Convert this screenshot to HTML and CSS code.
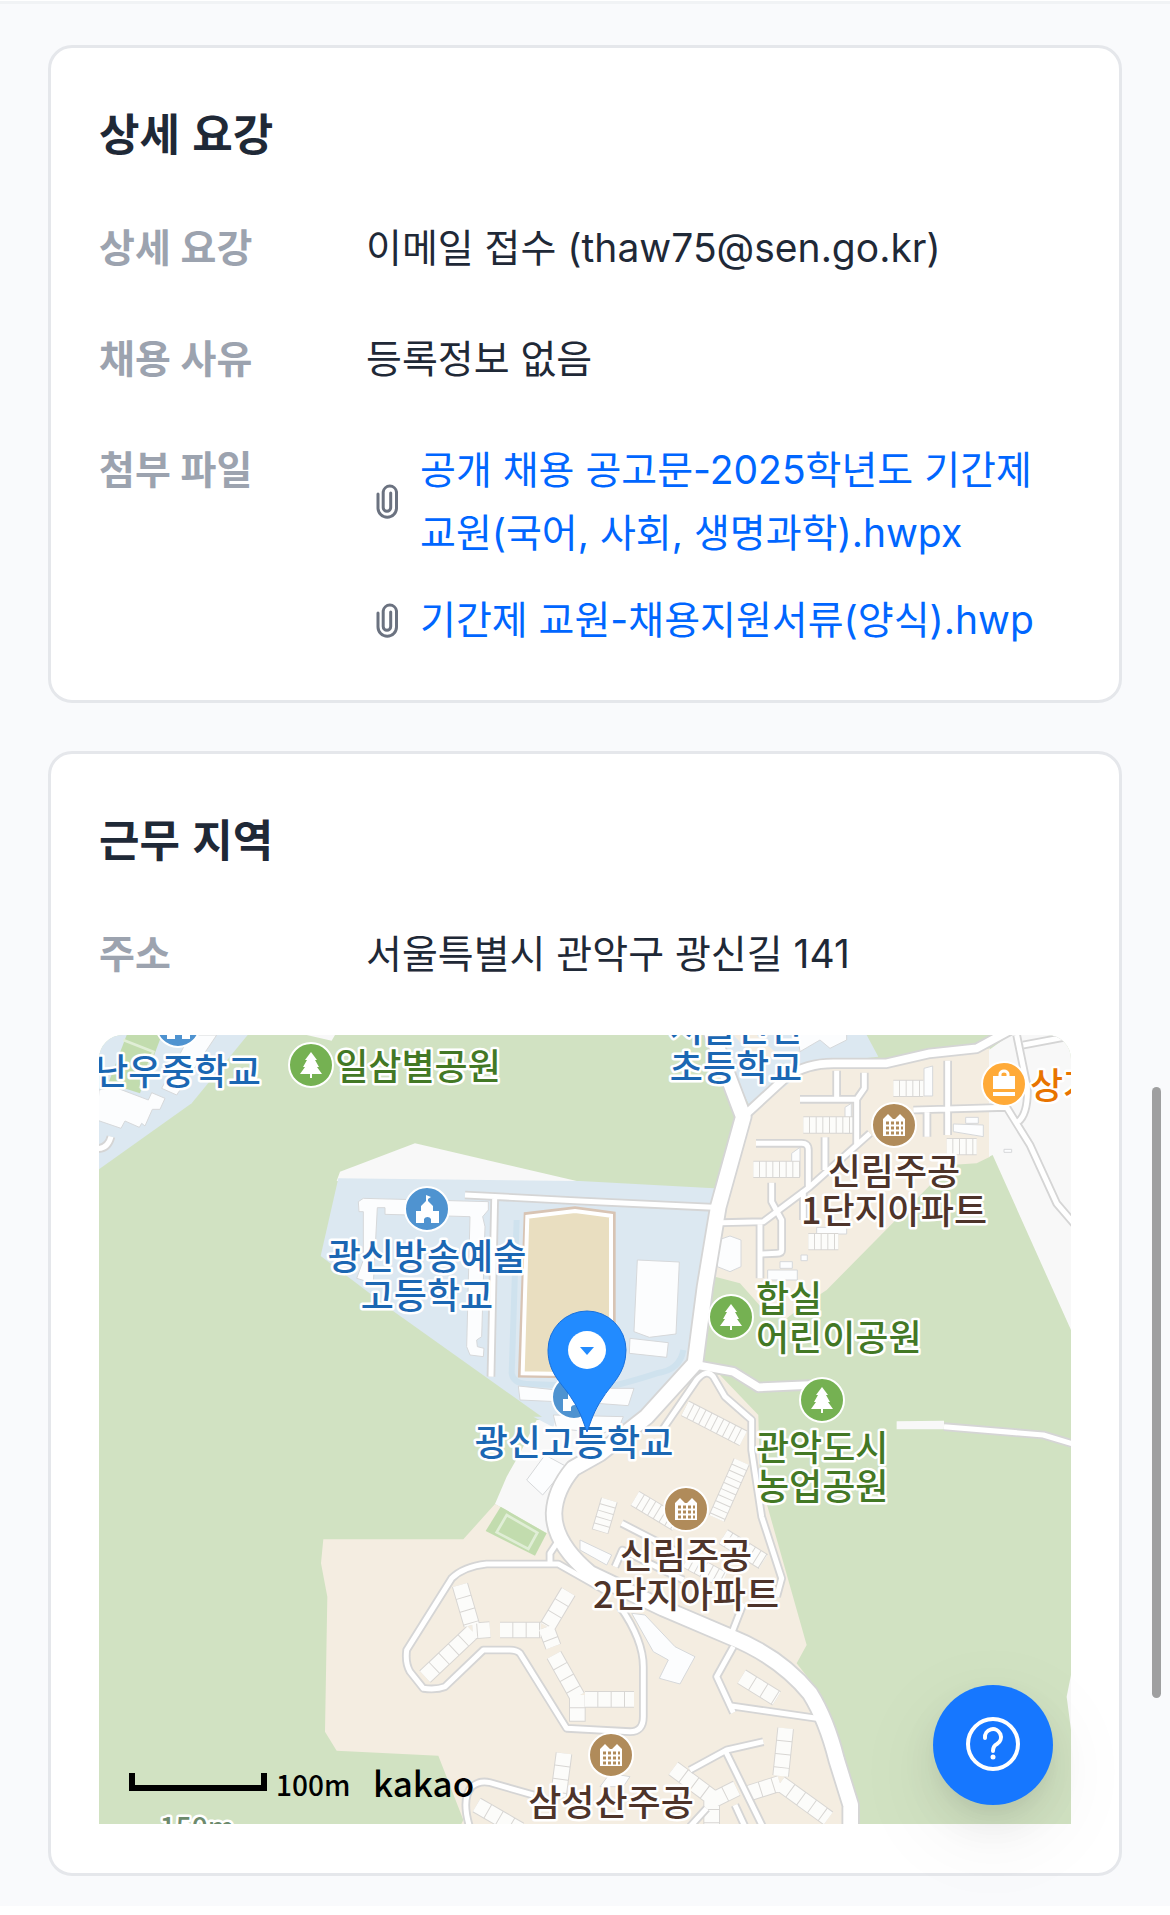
FILE: index.html
```html
<!DOCTYPE html>
<html lang="ko">
<head>
<meta charset="utf-8">
<meta name="viewport" content="width=device-width, initial-scale=1">
<title>채용 상세</title>
<link rel="stylesheet" href="styles.css">
</head>
<body>
<main class="page">
  <section class="card">
    <h2 class="card-title">상세 요강</h2>
    <dl class="info">
      <div class="row"><dt>상세 요강</dt><dd>이메일 접수 (thaw75@sen.go.kr)</dd></div>
      <div class="row"><dt>채용 사유</dt><dd>등록정보 없음</dd></div>
      <div class="row">
        <dt>첨부 파일</dt>
        <dd>
          <ul class="files">
            <li class="file">
              <svg class="clip" viewBox="0 0 42 42" aria-hidden="true"><path d="M12 14V28a9 9 0 0 0 18.500 0V12a6.700 6.700 0 0 0-13.300 0V27.500a3.700 3.700 0 0 0 7.500 0V13"/></svg>
              <a href="#file-1">공개 채용 공고문-2025학년도 기간제 교원(국어, 사회, 생명과학).hwpx</a>
            </li>
            <li class="file">
              <svg class="clip" viewBox="0 0 42 42" aria-hidden="true"><path d="M12 14V28a9 9 0 0 0 18.500 0V12a6.700 6.700 0 0 0-13.300 0V27.500a3.700 3.700 0 0 0 7.500 0V13"/></svg>
              <a href="#file-2">기간제 교원-채용지원서류(양식).hwp</a>
            </li>
          </ul>
        </dd>
      </div>
    </dl>
  </section>

  <section class="card">
    <h2 class="card-title">근무 지역</h2>
    <dl class="info">
      <div class="row"><dt>주소</dt><dd>서울특별시 관악구 광신길 141</dd></div>
    </dl>
    <div class="map">
      <svg class="map-canvas" viewBox="0 0 972 789" role="img" aria-label="광신고등학교 주변 지도">
        <defs>
          <g id="roads-major">
            <path d="M1850 0L1960 290 1885 560 1845 800 1815 1030 1670 1190 1530 1300 1450 1345Q1395 1410 1392 1480 1392 1570 1500 1660L1720 1765 1920 1850Q2070 1910 2160 2020 2210 2100 2240 2220L2282 2355V2440"/>
          </g>
          <g id="roads-mid">
            <path d="M1965 285L2090 170Q2150 130 2230 130H2390L2520 100 2660 85 2780 20"/>
            <path d="M1820 1035L1930 1055 2005 1102 2160 1095"/>
          </g>
          <g id="roads-minor">
            <path d="M1125 525L1470 543 1870 562M1214 535L1203 1070"/>
            <path d="M2130 238H2300L2323 205V158M2240 152V238M2300 238V380M1895 608L2020 605 2160 500 2340 340M1998 370H2135Q2155 370 2155 390V500M2205 352V450M2045 488V545L2075 600V690Q2075 700 2060 700L2015 702M2010 605V775M2140 510V600"/>
            <path d="M2470 270L2750 262 2820 375 2900 550 2960 620M2511 270V350M2573 122V345M2780 45L2812 200Q2815 280 2785 305M2800 75L2960 45"/>
            <path d="M1710 1240L1820 1080Q1850 1045 1870 1070L1905 1130 1985 1200V1290L2015 1490 2075 1675 2060 1730M1960 1750L1925 1840M1575 1640L1597 1590 1780 1680M1595 1510L1770 1600"/>
            <path d="M2562 1220L2860 1245 2960 1275M1930 1880L1880 1970 1930 2078M1925 2058L2180 2095M2020 2165L1910 2190 1800 2250M1905 2190L2018 2420M1935 2355L1965 2420M1850 2365L1800 2420"/>
            <path d="M1590 1760Q1660 1860 1660 1940V2090Q1660 2135 1620 2135L1430 2125 1290 1900Q1280 1890 1260 1890H1180L1065 2000Q1040 2010 1000 2005L960 1955Q945 1930 950 1890L1085 1675Q1120 1640 1190 1632H1405L1560 1720M1380 1632V1600L1400 1570"/>
            <path d="M1145 2440Q1110 2340 1145 2300 1170 2280 1200 2288L1330 2325M10 385Q52 392 63 350"/>
          </g>
          <g id="blocks">
            <path d="M1110 1695L1145 1815M1005 1970L1148 1835M1200 1829L1148 1833M1230 1830H1352M1435 1715L1372 1820M1368 1822L1390 1880M1392 1905L1462 2030M1462 2025V2105M1485 2038H1632M1422 2200L1405 2330M1160 2355L1290 2430"/>
            <path d="M2087 2125L2072 2268M1750 2245L1870 2335M1940 2305L1860 2345M1865 2330V2420M1975 2320L2070 2290M2070 2290L2215 2395"/>
            <path d="M1955 1970L2060 2035"/>
          </g>
          <g id="rows">
            <path d="M1785 1165L1960 1255M1955 1325L1880 1495M1635 1435L1760 1510M1558 1440L1530 1535M1900 1550L2020 1625M1810 1310"/>
            <path d="M2410 205H2500M2140 315H2290M1990 448H2130M2570 380H2660M2155 665H2245M1790 1620L1900 1680"/>
          </g>
          <g id="tree" class="sign"><path d="M0-13 6-5H4L8 2H6L11 9H1V13H-1V9H-11L-6 2H-8L-4-5H-6Z"/></g>
          <g id="school" class="sign"><path d="M-11 2H-6V-3L-1-8V-14L4-12 1-10V-8L6-3V2H12V14H4V10A4 4 0 0 0-3 10V14H-11Z"/></g>
          <g id="flats"><path class="sign" d="M-11 11V-6L-6-11-1-6 1-6 6-11 11-6V11Z"/><path class="windows" d="M-8-2H9M-8 3H9M-8 8H9"/></g>
          <g id="bag"><path class="sign" d="M-11-8H11V5H-11ZM-11 8H11V12H-11Z"/><path class="handle" d="M-4-8V-10A4 3 0 0 1 4-10V-8"/></g>
        </defs>

        <rect class="forest" width="972" height="789"/>
        <g transform="scale(.33333) translate(-27 -45)">
          <path class="campus" d="M27 45H473L305 250 27 448Z"/>
          <path class="pitch" d="M110 45H215L150 220 55 190Z"/>
          <path class="pitch-line" d="M100 60L190 95 150 205"/>
          <path class="plain" d="M650 45H735L725 62ZM750 455L975 370 1460 483H740Z"/>
          <path class="campus" d="M745 475L1470 483 1872 505 1815 1050 1640 1210 1390 1215 905 870 692 708Z"/>
          <path class="plain" d="M1340 1200H1640L1530 1330 1430 1380 1370 1540 1215 1452 1250 1370 1290 1300Z"/>
          <path class="campus" d="M1330 1190L1390 1222 1400 1190ZM1560 1130H1760L1640 1220H1560ZM1870 45H2330L2365 110 2230 125 2120 190 1980 260 1940 180Z"/>
          <path class="estate" d="M1930 45H2000L2060 100 2010 130ZM1975 285L2135 160 2230 130H2390L2700 85V410L2660 430 2580 435 2210 810 2150 850 2090 895 2030 880 1950 790 1875 770 1900 600Z"/>
          <path class="plain" d="M2697 90L2760 45H2943V930L2708 405 2697 410Z"/>
          <path class="estate" d="M1840 1060L1890 1065 2005 1185 2010 1380 2150 1875 2120 1930 2190 2020 2250 2200 2300 2355 2305 2420H1110L1120 2400 1045 2207 740 2192 705 2135 712 1730 693 1630 700 1558H1120L1215 1452 1370 1540 1410 1380 1500 1340 1670 1200 1770 1110Z"/>
          <path class="plain" d="M2943 1965L2930 2030 2943 2130ZM2420 1204L2562 1202V1228H2420Z"/>
          <path class="pitch" d="M1232 1460L1370 1540 1335 1607 1187 1533Z"/>
          <path class="pitch-line" d="M1250 1485L1342 1538 1315 1587 1220 1537Z"/>
          <path class="track" d="M1280 600L1265 1060Q1270 1090 1310 1092L1560 1100Q1640 1080 1700 1060 1770 1050 1780 990"/>
          <path class="field-edge" d="M1310 585L1455 568 1568 583V1068L1293 1064Z"/>
          <path class="field" d="M1312 590L1455 573 1563 587V1064L1298 1060Z"/>

          <g class="building">
            <path d="M27 210L70 200 175 240 185 218 225 235 210 268H187L165 318 155 310 148 322 105 303 93 325 20 300ZM300 45H380L260 225 215 205Z"/>
            <path d="M805 545L820 535 1195 545V570L1178 590 1185 620 1175 950 1160 960 1162 980 1182 985 1180 1010 1140 1005 1130 980 1140 590 885 583V563H862L850 790 800 775 820 720V575H807Z"/>
            <path d="M1285 1098L1400 1110V1145L1290 1140ZM1545 1105H1632L1615 1157 1520 1150ZM1390 1185L1600 1190 1590 1215 1540 1240 1400 1225Z"/>
            <path d="M1642 720L1768 726 1758 942 1678 952 1632 935ZM1620 955L1735 968 1730 1012 1618 1000ZM1885 660L1920 648 1953 660V740L1920 755 1882 740Z"/>
            <path d="M2130 95L2190 60 2220 85 2270 60V30H2120ZM1365 1305L1430 1340 1358 1425 1310 1380Z"/>
            <path d="M1625 1780L1665 1785 1755 1880 1815 1910 1770 1992 1708 1975 1735 1920 1690 1895ZM1470 1560L1565 1605 1550 1635 1470 1590ZM1560 2260L1620 2270 1600 2300H1530Z"/>
            <path d="M2502 145L2528 138V228H2502ZM2265 262L2284 250V340H2265ZM2105 400L2130 382V470H2105ZM2590 312L2680 315V350L2590 335ZM2627 292H2665V310H2627ZM2180 622H2270V642H2180ZM2070 725H2107V745H2070ZM2033 750H2122V780H2033ZM2133 705H2152V722H2133ZM2742 388H2765V397H2742Z"/>
          </g>

          <use href="#blocks" class="blocks-edge"/><use href="#blocks" class="blocks-fill"/>
          <use href="#rows" class="rows-edge"/><use href="#rows" class="rows-fill"/>
          <use href="#roads-minor" class="road-edge minor"/>
          <use href="#roads-mid" class="road-edge mid"/>
          <use href="#roads-major" class="road-edge major"/>
          <use href="#roads-minor" class="road minor"/>
          <use href="#roads-mid" class="road mid"/>
          <use href="#roads-major" class="road major"/>
        </g>

        <g class="badge blue"><circle cx="79" cy="-10" r="22"/><circle cx="328" cy="174" r="22"/><circle cx="475" cy="362" r="22"/></g>
        <g class="badge green"><circle cx="212" cy="30" r="22"/><circle cx="632" cy="282" r="22"/><circle cx="723" cy="365" r="22"/></g>
        <g class="badge brown"><circle cx="795" cy="90" r="22"/><circle cx="587" cy="474" r="22"/><circle cx="512" cy="720" r="22"/></g>
        <g class="badge orange"><circle cx="905" cy="49" r="22"/></g>
        <use href="#school" x="79" y="-10"/><use href="#school" x="328" y="174"/><use href="#school" x="475" y="362"/>
        <use href="#tree" x="212" y="30"/><use href="#tree" x="632" y="282"/><use href="#tree" x="723" y="365"/>
        <use href="#flats" x="795" y="90"/><use href="#flats" x="587" y="474"/><use href="#flats" x="512" y="720"/>
        <use href="#bag" x="905" y="49"/>

        <g class="label school-text">
          <text x="79" y="50">난우중학교</text>
          <text x="637" y="7">서울인헌</text><text x="637" y="46">초등학교</text>
          <text x="328" y="235">광신방송예술</text><text x="328" y="274">고등학교</text>
          <text x="475" y="421">광신고등학교</text>
        </g>
        <g class="label park-text">
          <text x="319" y="45">일삼별공원</text>
          <text class="from-left" x="657" y="277">합실</text><text class="from-left" x="657" y="316">어린이공원</text>
          <text class="from-left" x="657" y="426">관악도시</text><text class="from-left" x="657" y="465">농업공원</text>
        </g>
        <g class="label flats-text">
          <text x="795" y="150">신림주공</text><text x="795" y="189">1단지아파트</text>
          <text x="587" y="534">신림주공</text><text x="587" y="573">2단지아파트</text>
          <text x="512" y="781">삼성산주공</text>
        </g>
        <g class="label shop-text"><text class="from-left" x="931" y="64">상가</text></g>
        <text class="label contour" x="98" y="803">150m</text>

        <path class="pin" d="M488 276A39 39 0 0 1 527 315C527 339 512 349 503 364 495 376 492 386 488 397 484 386 481 376 473 364 464 349 449 339 449 315A39 39 0 0 1 488 276Z"/>
        <circle class="pin-dot" cx="488" cy="315" r="19"/>
        <path class="pin-arrow" d="M481 312H495L488 320Z"/>

        <path class="scale-bar" d="M33 738V753H165V738"/>
        <text class="scale-text" x="177" y="761">100m</text>
        <text class="brand" x="274" y="762">kakao</text>
      </svg>
    </div>
  </section>
</main>

<button class="help" type="button" aria-label="도움말">
  <svg viewBox="0 0 54 54" aria-hidden="true"><circle cx="27" cy="27" r="25"/><path d="M19 21A8 8 0 1 1 31 27Q27 29 27 34"/><circle class="dot" cx="27" cy="40" r="2.500"/></svg>
</button>
<div class="scroll-thumb" aria-hidden="true"></div>
</body>
</html>
```
FILE: styles.css
```css
* { box-sizing: border-box; }
html { background: #fff; }
body {
  margin: 0;
  color: #1f2937;
  font-family: "Inter", "Noto Sans CJK KR", sans-serif;
  font-size: 39px;
  line-height: 63px;
  word-break: keep-all;
}
.page {
  display: flex;
  flex-direction: column;
  gap: 48px;
  margin-top: 1px;
  padding: 41px 48px 30px;
  background: #f9fafc;
  border-top: 3px solid #f1f3f5;
}
.card {
  padding: 48px 48px 49px;
  background: #fff;
  border: 3px solid #e5e7eb;
  border-radius: 24px;
}
.card-title {
  margin: 0 0 48px;
  font-family: "Noto Sans CJK KR", sans-serif;
  font-size: 44px;
  line-height: 72px;
  font-weight: 600;
}
.info {
  display: flex;
  flex-direction: column;
  gap: 48px;
  margin: 0;
}
.row {
  display: grid;
  grid-template-columns: 267px 1fr;
}
dt {
  color: #9ca3af;
  font-weight: 600;
}
dd { margin: 0; }
.files {
  display: flex;
  flex-direction: column;
  gap: 24px;
  margin: 0;
  padding: 0;
  list-style: none;
}
.file {
  display: flex;
  align-items: center;
  gap: 12px;
}
.file a {
  color: #06f;
  text-decoration: none;
}
.clip {
  flex: none;
  width: 42px;
  height: 42px;
  fill: none;
  stroke: #6b7280;
  stroke-width: 3;
  stroke-linecap: round;
}
.map {
  margin-top: 50px;
  overflow: hidden;
  border-radius: 24px 24px 0 0;
}
.map-canvas {
  display: block;
  width: 100%;
  height: auto;
}

/* terrain */
.forest { fill: #d1e2c2; }
.campus { fill: #dce8f1; }
.plain { fill: #f8f8f8; }
.estate { fill: #f4ede1; }
.pitch { fill: #c2dcae; }
.pitch-line { fill: none; stroke: #e0eed6; stroke-width: 8; }
.track { fill: none; stroke: #cfe2ee; stroke-width: 18; }
.field-edge { fill: none; stroke: #d8c4b4; stroke-width: 18; }
.field { fill: #e9dec0; stroke: #fff; stroke-width: 12; }
.building { fill: #fcfdfe; stroke: #d6d8da; stroke-width: 3; }
.blocks-edge { fill: none; stroke: #d8d6d3; stroke-width: 50; }
.blocks-fill { fill: none; stroke: #fcfcfa; stroke-width: 44; stroke-dasharray: 37 3; }
.rows-edge { fill: none; stroke: #d8d6d3; stroke-width: 52; }
.rows-fill { fill: none; stroke: #fcfcfa; stroke-width: 46; stroke-dasharray: 17 3; }
.road-edge, .road { fill: none; stroke-linejoin: round; }
.road-edge { stroke: #d5d5d5; }
.road { stroke: #fff; }
.road-edge.minor { stroke-width: 26; }
.road-edge.mid { stroke-width: 34; }
.road-edge.major { stroke-width: 55; }
.road.minor { stroke-width: 15; }
.road.mid { stroke-width: 23; }
.road.major { stroke-width: 44; }

/* places */
.badge { stroke: #fff; stroke-width: 2; }
.blue { fill: #4f93d0; }
.green { fill: #75b152; }
.brown { fill: #b08b5a; }
.orange { fill: #ffaa38; }
.sign { fill: #fff; }
.windows { fill: none; stroke: #b08b5a; stroke-width: 3; stroke-dasharray: 3 2; }
.handle { fill: none; stroke: #fff; stroke-width: 3; }
.label {
  font-family: "Noto Sans CJK KR", sans-serif;
  font-size: 36px;
  font-weight: 500;
  text-anchor: middle;
  stroke: #fff;
  stroke-width: 5;
  stroke-linejoin: round;
  paint-order: stroke;
}
.from-left { text-anchor: start; }
.school-text { fill: #1b67b3; }
.park-text { fill: #437825; }
.flats-text { fill: #4e342a; }
.shop-text { fill: #e87400; }
.contour { fill: #6c8a6c; font-size: 28px; }
.pin { fill: #228bff; stroke: #1870dc; stroke-width: 1; }
.pin-dot { fill: #fff; }
.pin-arrow { fill: #228bff; }
.scale-bar { fill: none; stroke: #000; stroke-width: 6; }
.scale-text, .brand {
  font-family: "Noto Sans CJK KR", sans-serif;
  font-size: 28px;
  font-weight: 500;
}
.brand { font-size: 35px; }

.help {
  position: fixed;
  right: 117px;
  bottom: 110px;
  display: grid;
  place-items: center;
  width: 120px;
  height: 120px;
  padding: 0 0 2px;
  border: 0;
  border-radius: 50%;
  background: #1677ff;
  box-shadow: 0 18px 48px rgba(0, 0, 0, .08), 0 9px 18px rgba(0, 0, 0, .04), 0 27px 84px 12px rgba(0, 0, 0, .05);
}
.help svg {
  width: 54px;
  height: 54px;
  fill: none;
  stroke: #fff;
  stroke-width: 4;
  stroke-linecap: round;
}
.help .dot { fill: #fff; stroke: none; }
.scroll-thumb {
  position: fixed;
  top: 1087px;
  right: 9px;
  width: 9px;
  height: 611px;
  border-radius: 5px;
  background: #9f9fa0;
}
```
